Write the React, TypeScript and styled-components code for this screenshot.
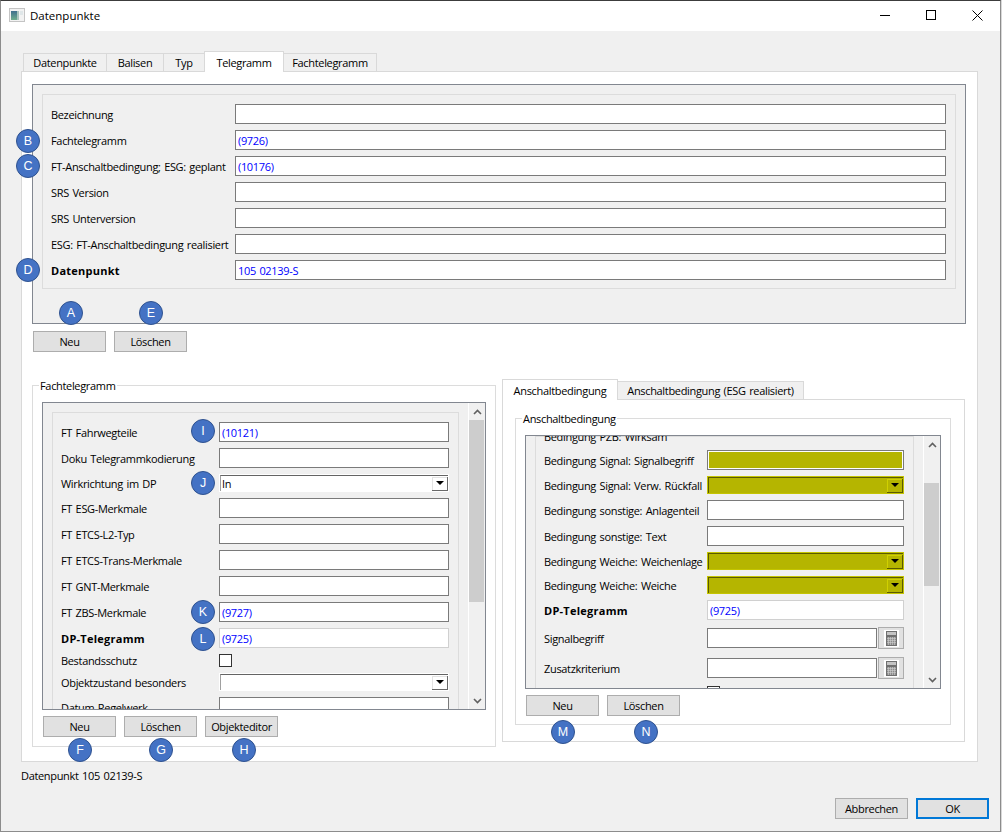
import React from "react";
import styled, { createGlobalStyle } from "styled-components";

type RowKind = "text" | "readonly" | "combo" | "check" | "fill" | "calc";

interface RowData {
  label: string;
  kind: RowKind;
  value?: string;
  bold?: boolean;
  yellow?: boolean;
}

const topRows: RowData[] = [
  { label: "Bezeichnung", kind: "text" },
  { label: "Fachtelegramm", kind: "text", value: "(9726)" },
  { label: "FT-Anschaltbedingung; ESG: geplant", kind: "text", value: "(10176)" },
  { label: "SRS Version", kind: "text" },
  { label: "SRS Unterversion", kind: "text" },
  { label: "ESG: FT-Anschaltbedingung realisiert", kind: "text" },
  { label: "Datenpunkt", kind: "text", value: "105 02139-S", bold: true },
];

const leftRows: RowData[] = [
  { label: "FT Fahrwegteile", kind: "text", value: "(10121)" },
  { label: "Doku Telegrammkodierung", kind: "text" },
  { label: "Wirkrichtung im DP", kind: "combo", value: "In" },
  { label: "FT ESG-Merkmale", kind: "text" },
  { label: "FT ETCS-L2-Typ", kind: "text" },
  { label: "FT ETCS-Trans-Merkmale", kind: "text" },
  { label: "FT GNT-Merkmale", kind: "text" },
  { label: "FT ZBS-Merkmale", kind: "text", value: "(9727)" },
  { label: "DP-Telegramm", kind: "readonly", value: "(9725)", bold: true },
  { label: "Bestandsschutz", kind: "check" },
  { label: "Objektzustand besonders", kind: "combo" },
  { label: "Datum Regelwerk", kind: "text" },
];

const rightRows: RowData[] = [
  { label: "Bedingung Signal: Signalbegriff", kind: "fill" },
  { label: "Bedingung Signal: Verw. Rückfall", kind: "combo", yellow: true },
  { label: "Bedingung sonstige: Anlagenteil", kind: "text" },
  { label: "Bedingung sonstige: Text", kind: "text" },
  { label: "Bedingung Weiche: Weichenlage", kind: "combo", yellow: true },
  { label: "Bedingung Weiche: Weiche", kind: "combo", yellow: true },
  { label: "DP-Telegramm", kind: "readonly", value: "(9725)", bold: true },
  { label: "Signalbegriff", kind: "calc" },
  { label: "Zusatzkriterium", kind: "calc" },
  { label: "", kind: "check" },
];

const badges = [
  { t: "A", x: 71, y: 313 },
  { t: "B", x: 28, y: 141 },
  { t: "C", x: 28, y: 166 },
  { t: "D", x: 28, y: 270 },
  { t: "E", x: 151, y: 313 },
  { t: "F", x: 80, y: 750 },
  { t: "G", x: 161, y: 750 },
  { t: "H", x: 244, y: 750 },
  { t: "I", x: 203, y: 431 },
  { t: "J", x: 203, y: 483 },
  { t: "K", x: 203, y: 612 },
  { t: "L", x: 203, y: 639 },
  { t: "M", x: 563, y: 732 },
  { t: "N", x: 646, y: 732 },
];

const GlobalStyle = createGlobalStyle`
  html, body {
    margin: 0;
    width: 1002px;
    height: 832px;
    overflow: hidden;
    background: #d8d8d8;
  }
  * {
    box-sizing: border-box;
  }
`;

const Window = styled.div`
  position: relative;
  width: 1001px;
  height: 832px;
  display: flex;
  flex-direction: column;
  background: #f0f0f0;
  border-top: 1px solid #3c3c3c;
  border-left: 1px solid #8c8c8c;
  border-right: 1px solid #8c8c8c;
  border-bottom: 1px solid #8c8c8c;
  font-family: "Open Sans", sans-serif;
  font-size: 11px;
  letter-spacing: -0.33px;
  word-spacing: 1px;
  color: #000;
`;

const TitleBar = styled.div`
  height: 30px;
  flex: none;
  display: flex;
  align-items: center;
  background: #fff;
  padding: 0 0 2px 8px;
`;

const TitleText = styled.span`
  margin-left: 5px;
  font-size: 11.5px;
  letter-spacing: 0;
`;

const WindowButtons = styled.div`
  margin-left: auto;
  display: flex;
`;

const WindowButton = styled.div`
  width: 46px;
  height: 28px;
  display: flex;
  align-items: center;
  justify-content: center;
`;

const Body = styled.div`
  flex: 1;
  display: flex;
  flex-direction: column;
  padding: 20px 22px 0 20px;
`;

const TabBar = styled.div<{ $indent?: number }>`
  display: flex;
  align-items: flex-end;
  height: 21px;
  padding-left: ${(p) => p.$indent ?? 0}px;
  margin-bottom: -1px;
  position: relative;
  z-index: 1;
`;

const Tab = styled.div<{ $active?: boolean; $w: number }>`
  width: ${(p) => p.$w}px;
  height: ${(p) => (p.$active ? 21 : 19)}px;
  display: flex;
  align-items: center;
  justify-content: center;
  margin-left: -1px;
  background: ${(p) => (p.$active ? "#fff" : "#f0f0f0")};
  border: 1px solid #d9d9d9;
  border-bottom: ${(p) => (p.$active ? "none" : "1px solid #d9d9d9")};
`;

const TabPane = styled.div`
  background: #fff;
  border: 1px solid #d9d9d9;
  height: 691px;
  padding: 12px 11px 0 10px;
`;

const Frame = styled.div`
  height: 240px;
  background: #f0f0f0;
  border: 1px solid #828790;
  padding: 9px;
`;

const FormGroup = styled.div<{ $pad?: number }>`
  border: 1px solid #dcdcdc;
  padding: ${(p) => p.$pad ?? 9}px 9px 8px 8px;
  display: flex;
  flex-direction: column;
  gap: 6px;
`;

const Row = styled.div<{ $h?: number }>`
  display: flex;
  align-items: center;
  flex: none;
  height: ${(p) => p.$h ?? 20}px;
`;

const Label = styled.div<{ $w: number; $bold?: boolean }>`
  width: ${(p) => p.$w}px;
  flex: none;
  font-weight: ${(p) => (p.$bold ? 700 : 400)};
  letter-spacing: ${(p) => (p.$bold ? "0.25px" : "inherit")};
  white-space: nowrap;
`;

const Input = styled.div<{ $readonly?: boolean }>`
  flex: 1;
  min-width: 0;
  height: 20px;
  display: flex;
  align-items: center;
  padding-left: 2px;
  background: #fff;
  color: #0000ff;
  border: 1px solid ${(p) => (p.$readonly ? "#d0d0d0" : "#7a7a7a")};
`;

const FillInput = styled.div`
  flex: 1;
  height: 20px;
  background: #b5b500;
  border: 1px solid #7a7a7a;
  box-shadow: inset 0 0 0 1px #fff;
`;

const Combo = styled.div<{ $yellow?: boolean }>`
  flex: 1;
  height: 18px;
  padding: 1px;
  background: ${(p) => (p.$yellow ? "#c4c400" : "#fff")};
`;

const ComboInner = styled.div<{ $yellow?: boolean }>`
  height: 100%;
  display: flex;
  align-items: center;
  padding-left: 1px;
  background: ${(p) => (p.$yellow ? "#b5b500" : "#fff")};
  border-top: 1px solid ${(p) => (p.$yellow ? "#5a5a00" : "#646464")};
  border-left: 1px solid ${(p) => (p.$yellow ? "#5a5a00" : "#a0a0a0")};
`;

const ComboButton = styled.div<{ $yellow?: boolean }>`
  margin-left: auto;
  width: 16px;
  height: 14px;
  display: flex;
  align-items: center;
  justify-content: center;
  border-right: 1px solid ${(p) => (p.$yellow ? "#5a5a00" : "#696969")};
  border-bottom: 1px solid ${(p) => (p.$yellow ? "#5a5a00" : "#696969")};
  box-shadow: inset 1px 1px 0 ${(p) => (p.$yellow ? "#d0d000" : "#e3e3e3")};
`;

const ComboArrow = styled.div`
  width: 0;
  height: 0;
  border-left: 4px solid transparent;
  border-right: 4px solid transparent;
  border-top: 4px solid #000;
`;

const CheckBox = styled.div`
  width: 13px;
  height: 13px;
  background: #fff;
  border: 1px solid #333;
`;

const CalcField = styled.div`
  flex: 1;
  display: flex;
  align-items: center;
  gap: 1px;
`;

const CalcButton = styled.div`
  width: 26px;
  height: 22px;
  flex: none;
  display: flex;
  align-items: center;
  justify-content: center;
  background: #e1e1e1;
  border: 1px solid #adadad;
`;

const ButtonRow = styled.div<{ $top: number; $left: number }>`
  display: flex;
  gap: 8px;
  margin-top: ${(p) => p.$top}px;
  padding-left: ${(p) => p.$left}px;
`;

const PushButton = styled.div<{ $primary?: boolean }>`
  width: 73px;
  height: 21px;
  display: flex;
  align-items: center;
  justify-content: center;
  background: #e1e1e1;
  border: ${(p) => (p.$primary ? "2px solid #0078d7" : "1px solid #adadad")};
`;

const Columns = styled.div`
  display: flex;
  align-items: flex-start;
  gap: 6px;
  margin-top: 27px;
`;

const LeftColumn = styled.div`
  width: 464px;
  flex: none;
  padding-top: 6px;
`;

const RightColumn = styled.div`
  width: 463px;
  flex: none;
`;

const GroupBox = styled.div<{ $h: number }>`
  height: ${(p) => p.$h}px;
  border: 1px solid #dcdcdc;
  padding: 0 9px;
`;

const Legend = styled.div`
  width: fit-content;
  height: 16px;
  margin: -8px 0 0 -3px;
  padding: 0 1px;
  background: #fff;
  line-height: 16px;
`;

const ScrollBox = styled.div<{ $h: number; $top: number }>`
  height: ${(p) => p.$h}px;
  margin-top: ${(p) => p.$top}px;
  display: flex;
  background: #f0f0f0;
  border: 1px solid #828790;
  overflow: hidden;
`;

const ScrollContent = styled.div<{ $top: number }>`
  flex: 1;
  min-width: 0;
  padding: ${(p) => p.$top}px 9px 0 9px;
`;

const ScrollBar = styled.div`
  width: 17px;
  flex: none;
  display: flex;
  flex-direction: column;
  align-items: center;
  border-left: 1px solid #fff;
`;

const ScrollArrow = styled.div`
  height: 17px;
  flex: none;
  display: flex;
  align-items: center;
  justify-content: center;
`;

const ScrollTrack = styled.div`
  flex: 1;
  width: 100%;
  padding-right: 1px;
`;

const ScrollThumb = styled.div<{ $top: number; $h: number }>`
  margin-top: ${(p) => p.$top}px;
  height: ${(p) => p.$h}px;
  background: #cdcdcd;
`;

const InnerPane = styled.div`
  background: #fff;
  border: 1px solid #d9d9d9;
  height: 343px;
  padding: 18px 13px 0 12px;
`;

const ClippedRow = styled(Row)`
  align-items: flex-end;
  line-height: 14px;
`;

const StatusText = styled.div`
  height: 16px;
  margin-top: 6px;
  line-height: 16px;
`;

const DialogButtons = styled.div`
  display: flex;
  justify-content: flex-end;
  gap: 8px;
  margin-top: 14px;
  margin-right: -11px;
`;

const Badge = styled.div<{ $x: number; $y: number }>`
  position: absolute;
  left: ${(p) => p.$x - 13}px;
  top: ${(p) => p.$y - 13}px;
  width: 24px;
  height: 24px;
  display: flex;
  align-items: center;
  justify-content: center;
  border-radius: 50%;
  background: #4472c4;
  border: 1px solid #2f528f;
  color: #fff;
  font-family: "Liberation Sans", sans-serif;
  font-size: 12.5px;
  letter-spacing: 0;
  z-index: 2;
`;

const AppIcon = () => (
  <svg width="16" height="15" viewBox="0 0 16 15">
    <defs>
      <linearGradient id="appIconFill" x1="0" y1="0" x2="0" y2="1">
        <stop offset="0" stopColor="#3f6f8e" />
        <stop offset="1" stopColor="#6fae8c" />
      </linearGradient>
    </defs>
    <rect x="0.5" y="0.5" width="15" height="13" fill="#f2f2f2" stroke="#c4c4c4" />
    <rect x="2" y="3" width="6" height="9" fill="url(#appIconFill)" />
    <rect x="8" y="3" width="2" height="9" fill="#a9c4bd" />
    <rect x="11" y="3" width="3" height="4" fill="#dfe6e8" />
  </svg>
);

const MinimizeIcon = () => (
  <svg width="10" height="10" viewBox="0 0 10 10">
    <path d="M0 5.5H10" stroke="#000" fill="none" />
  </svg>
);

const MaximizeIcon = () => (
  <svg width="10" height="10" viewBox="0 0 10 10">
    <rect x="0.5" y="0.5" width="9" height="9" stroke="#000" fill="none" />
  </svg>
);

const CloseIcon = () => (
  <svg width="11" height="11" viewBox="0 0 11 11">
    <path d="M0.5 0.5L10.5 10.5M10.5 0.5L0.5 10.5" stroke="#000" fill="none" />
  </svg>
);

const Chevron = ({ down }: { down?: boolean }) => (
  <svg width="9" height="6" viewBox="0 0 9 6">
    <path
      d={down ? "M1 1L4.5 4.5L8 1" : "M1 5L4.5 1.5L8 5"}
      stroke="#606060"
      strokeWidth="1.6"
      fill="none"
    />
  </svg>
);

const CalcIcon = () => (
  <svg width="15" height="17" viewBox="0 0 15 17">
    <rect width="15" height="17" fill="#fff" />
    <rect x="2" y="1" width="11" height="15" fill="#6f6f6f" />
    <rect x="3" y="2" width="9" height="3" fill="#c4c4c4" />
    <rect x="3" y="7" width="9" height="8" fill="#8c8c8c" />
    <path
      d="M3 8.5H12M3 10.5H12M3 12.5H12M4.5 7V15M6.5 7V15M8.5 7V15M10.5 7V15"
      stroke="#d0d0d0"
      strokeWidth="0.6"
    />
  </svg>
);

const Field = ({ row }: { row: RowData }) => {
  switch (row.kind) {
    case "combo":
      return (
        <Combo $yellow={row.yellow}>
          <ComboInner $yellow={row.yellow}>
            {row.value}
            <ComboButton $yellow={row.yellow}>
              <ComboArrow />
            </ComboButton>
          </ComboInner>
        </Combo>
      );
    case "check":
      return <CheckBox />;
    case "fill":
      return <FillInput />;
    case "readonly":
      return <Input $readonly>{row.value}</Input>;
    case "calc":
      return (
        <CalcField>
          <Input />
          <CalcButton>
            <CalcIcon />
          </CalcButton>
        </CalcField>
      );
    default:
      return <Input>{row.value}</Input>;
  }
};

const rowHeight = (kind: RowKind) => {
  if (kind === "combo") return 18;
  if (kind === "check") return 13;
  if (kind === "calc") return 24;
  return 20;
};

const FormRows = ({ rows, labelWidth }: { rows: RowData[]; labelWidth: number }) => (
  <>
    {rows.map((row, i) => (
      <Row key={i} $h={rowHeight(row.kind)}>
        <Label $w={labelWidth} $bold={row.bold}>
          {row.label}
        </Label>
        <Field row={row} />
      </Row>
    ))}
  </>
);

const Scroller = ({ top, height }: { top: number; height: number }) => (
  <ScrollBar>
    <ScrollArrow>
      <Chevron />
    </ScrollArrow>
    <ScrollTrack>
      <ScrollThumb $top={top} $h={height} />
    </ScrollTrack>
    <ScrollArrow>
      <Chevron down />
    </ScrollArrow>
  </ScrollBar>
);

export default function App() {
  return (
    <>
      <GlobalStyle />
      <Window>
        <TitleBar>
          <AppIcon />
          <TitleText>Datenpunkte</TitleText>
          <WindowButtons>
            <WindowButton>
              <MinimizeIcon />
            </WindowButton>
            <WindowButton>
              <MaximizeIcon />
            </WindowButton>
            <WindowButton>
              <CloseIcon />
            </WindowButton>
          </WindowButtons>
        </TitleBar>
        <Body>
          <TabBar $indent={3}>
            <Tab $w={84}>Datenpunkte</Tab>
            <Tab $w={58}>Balisen</Tab>
            <Tab $w={42}>Typ</Tab>
            <Tab $active $w={80}>
              Telegramm
            </Tab>
            <Tab $w={94}>Fachtelegramm</Tab>
          </TabBar>
          <TabPane>
            <Frame>
              <FormGroup>
                <FormRows rows={topRows} labelWidth={184} />
              </FormGroup>
            </Frame>
            <ButtonRow $top={7} $left={1}>
              <PushButton>Neu</PushButton>
              <PushButton>Löschen</PushButton>
            </ButtonRow>
            <Columns>
              <LeftColumn>
                <GroupBox $h={362}>
                  <Legend>Fachtelegramm</Legend>
                  <ScrollBox $h={308} $top={8}>
                    <ScrollContent $top={9}>
                      <FormGroup>
                        <FormRows rows={leftRows} labelWidth={158} />
                      </FormGroup>
                    </ScrollContent>
                    <Scroller top={0} height={182} />
                  </ScrollBox>
                  <ButtonRow $top={6} $left={1}>
                    <PushButton>Neu</PushButton>
                    <PushButton>Löschen</PushButton>
                    <PushButton>Objekteditor</PushButton>
                  </ButtonRow>
                </GroupBox>
              </LeftColumn>
              <RightColumn>
                <TabBar $indent={1}>
                  <Tab $active $w={116}>
                    Anschaltbedingung
                  </Tab>
                  <Tab $w={187}>Anschaltbedingung (ESG realisiert)</Tab>
                </TabBar>
                <InnerPane>
                  <GroupBox $h={307}>
                    <Legend>Anschaltbedingung</Legend>
                    <ScrollBox $h={254} $top={8}>
                      <ScrollContent $top={0}>
                        <FormGroup $pad={0}>
                          <ClippedRow $h={7}>
                            <Label $w={163}>Bedingung PZB: Wirksam</Label>
                          </ClippedRow>
                          <FormRows rows={rightRows} labelWidth={163} />
                        </FormGroup>
                      </ScrollContent>
                      <Scroller top={30} height={103} />
                    </ScrollBox>
                    <ButtonRow $top={6} $left={1}>
                      <PushButton>Neu</PushButton>
                      <PushButton>Löschen</PushButton>
                    </ButtonRow>
                  </GroupBox>
                </InnerPane>
              </RightColumn>
            </Columns>
          </TabPane>
          <StatusText>Datenpunkt 105 02139-S</StatusText>
          <DialogButtons>
            <PushButton>Abbrechen</PushButton>
            <PushButton $primary>OK</PushButton>
          </DialogButtons>
        </Body>
        {badges.map((b) => (
          <Badge key={b.t} $x={b.x} $y={b.y}>
            {b.t}
          </Badge>
        ))}
      </Window>
    </>
  );
}
